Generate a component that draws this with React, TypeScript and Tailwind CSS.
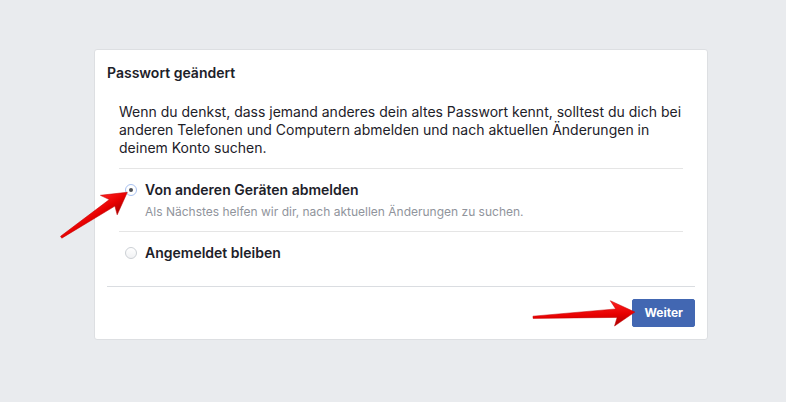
import React from 'react';

const Radio = ({checked}: {checked?: boolean}) => (
  checked ? (
    <span className="flex h-[12px] w-[12px] shrink-0 items-center justify-center rounded-full border border-[#a8c1f0] bg-white">
      <span className="h-[4px] w-[4px] rounded-full bg-[#4b4f56]"/>
    </span>
  ) : (
    <span className="h-[12px] w-[12px] shrink-0 rounded-full border border-[#ccd0d5] bg-gradient-to-b from-white to-[#f1f2f4]"/>
  )
);

// red marker arrow, drawn pointing right then rotated into place
const Arrow = ({x, y, len, angle}: {x: number; y: number; len: number; angle: number}) => {
  const L = len;
  const pts = [
    [0, -0.8], [L - 19, -4], [L - 24, -12.5], [L, 0], [L - 21, 13], [L - 18, 4.5], [0, 1.4],
  ].map(p => p.join(',')).join(' ');
  return (
    <g transform={`translate(${x} ${y}) rotate(${angle})`}>
      <polygon points={pts} fill="url(#redGrad)" stroke="#c40000" strokeWidth="0.5" strokeLinejoin="round"/>
    </g>
  );
};

const App = () => {
  return (
    <div className="relative h-[402px] w-[786px] overflow-hidden bg-[#e9ebee] pl-[94px] pt-[49px] font-['Inter','Liberation_Sans',sans-serif] text-[#1d2129]">
      <div className="w-[614px] h-[291px] rounded-[3px] border border-[#dddfe2] bg-white flex flex-col">
        <div className="px-3 pt-[14px] text-[14px] leading-[18px] font-semibold">Passwort geändert</div>
        <div className="mx-6 mt-[21px]">
          <p className="text-[14px] leading-[18px] pb-[11px] border-b border-[#e5e5e5]">
            Wenn du denkst, dass jemand anderes dein altes Passwort kennt, solltest du dich bei<br/>
            anderen Telefonen und Computern abmelden und nach aktuellen Änderungen in<br/>
            deinem Konto suchen.
          </p>
          <div className="flex items-start gap-2 pt-[12px] pb-[11px] pl-[6px] border-b border-[#e5e5e5]">
            <span className="mt-[3px]"><Radio checked/></span>
            <div>
              <div className="text-[14px] leading-[18px] font-semibold">Von anderen Geräten abmelden</div>
              <div className="mt-[5px] text-[12px] leading-[16px] text-[#90949c]">Als Nächstes helfen wir dir, nach aktuellen Änderungen zu suchen.</div>
            </div>
          </div>
          <div className="flex items-center gap-2 pt-[12px] pl-[6px]">
            <Radio/>
            <div className="text-[14px] leading-[18px] font-semibold">Angemeldet bleiben</div>
          </div>
        </div>
        <div className="mt-auto mx-3 border-t border-[#dadde1] flex justify-end pt-3 pb-3">
          <button className="h-[28px] px-[11px] rounded-[2px] border border-[#4267b2] bg-[#4267b2] text-white text-[12px] font-bold leading-none">
            Weiter
          </button>
        </div>
      </div>

      <svg className="pointer-events-none absolute left-0 top-0" width="786" height="402" viewBox="0 0 786 402">
        <defs>
          <linearGradient id="redGrad" x1="0" y1="0" x2="0" y2="1">
            <stop offset="0" stopColor="#ff2020"/>
            <stop offset="0.55" stopColor="#e60000"/>
            <stop offset="1" stopColor="#a80000"/>
          </linearGradient>
        </defs>
        <Arrow x={61} y={237} len={80} angle={-34}/>
        <Arrow x={533} y={317} len={102} angle={-2.8}/>
      </svg>
    </div>
  );
};

export default App;
